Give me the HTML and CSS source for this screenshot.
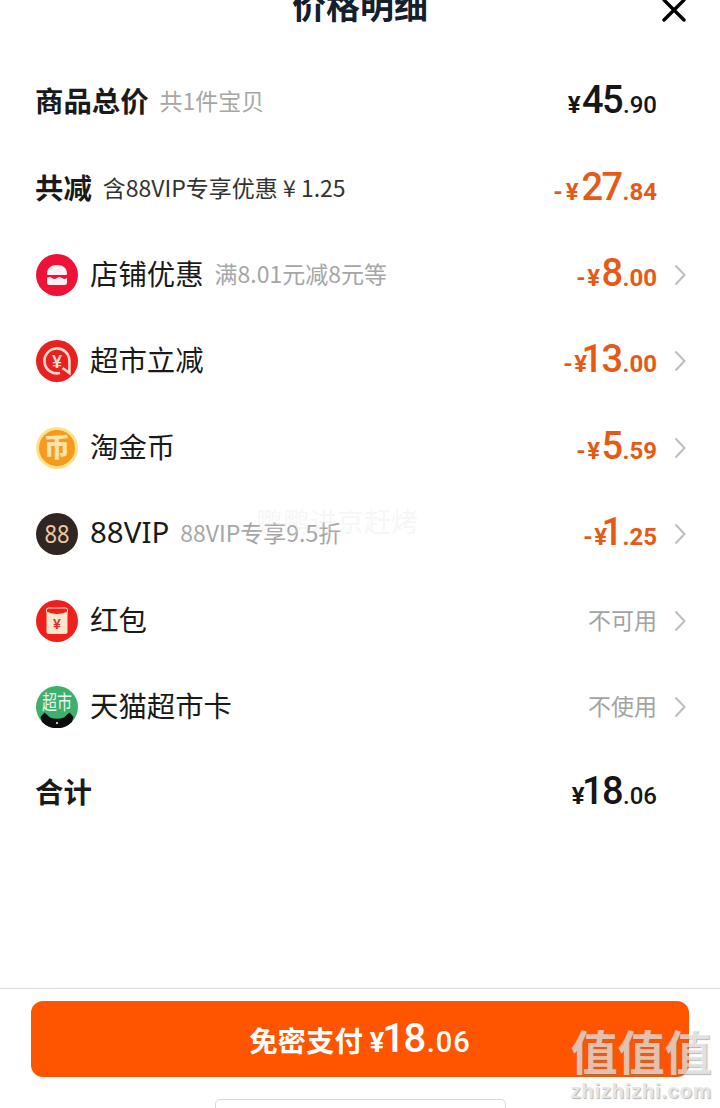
FILE: index.html
```html
<!DOCTYPE html>
<html lang="zh">
<head>
<meta charset="utf-8">
<title>价格明细</title>
<link rel="stylesheet" href="styles.css">
</head>
<body>
<div class="page">
  <header class="header">
    <span></span>
    <h1 class="title">价格明细</h1>
    <svg class="close" width="24" height="22" viewBox="0 0 24 22"><path d="M2 0 L22 20 M22 0 L2 20" fill="none" stroke="#000" stroke-width="3.4" stroke-linecap="round"/></svg>
  </header>

  <main class="list">
    <div class="row">
      <div class="left"><span class="label strong">商品总价</span><span class="sub">共1件宝贝</span></div>
      <div class="price dark"><span class="cur">¥</span><span class="int">45</span><span class="dec">.90</span></div>
      <span class="slot"></span>
    </div>
    <div class="row">
      <div class="left"><span class="label strong">共减</span><span class="sub darker">含88VIP专享优惠 ¥ 1.25</span></div>
      <div class="price orange"><span class="cur wide">-¥</span><span class="int">27</span><span class="dec">.84</span></div>
      <span class="slot"></span>
    </div>
    <div class="row">
      <div class="left">
        <svg class="icon" viewBox="0 0 42 42"><circle cx="21" cy="21" r="21" fill="#ee1238"/><path d="M11 20 C11 14 15 11 21 11 C27 11 31 14 31 20 a1 1 0 0 1 -1 1 H12 a1 1 0 0 1 -1 -1 Z" fill="#fff" opacity=".94"/><path d="M11 24 q2.5 -2 5 0 t5 0 t5 0 t5 0 V28.5 a2.5 2.5 0 0 1 -2.5 2.5 H13.5 a2.5 2.5 0 0 1 -2.5 -2.5 Z" fill="#fff" opacity=".94"/></svg>
        <span class="label">店铺优惠</span><span class="sub">满8.01元减8元等</span>
      </div>
      <div class="price orange"><span class="cur">-¥</span><span class="int">8</span><span class="dec">.00</span></div>
      <span class="slot"><svg class="chev" width="12" height="22" viewBox="0 0 12 22"><path d="M1.5 1.5 L10.5 11 L1.5 20.5" fill="none" stroke="#bdbdbd" stroke-width="2"/></svg></span>
    </div>
    <div class="row">
      <div class="left">
        <svg class="icon" viewBox="0 0 42 42"><circle cx="21" cy="21" r="21" fill="#e8211f"/><path d="M24 33 A12.5 12.5 0 1 1 33.4 21 L33.4 33 L26.5 28" fill="none" stroke="#fbd9cf" stroke-width="2.6"/><text x="21" y="27.5" class="icon-yen">¥</text></svg>
        <span class="label">超市立减</span>
      </div>
      <div class="price orange"><span class="cur">-¥</span><span class="int one">13</span><span class="dec">.00</span></div>
      <span class="slot"><svg class="chev" width="12" height="22" viewBox="0 0 12 22"><path d="M1.5 1.5 L10.5 11 L1.5 20.5" fill="none" stroke="#bdbdbd" stroke-width="2"/></svg></span>
    </div>
    <div class="row">
      <div class="left">
        <svg class="icon" viewBox="0 0 42 42"><circle cx="21" cy="21" r="21" fill="#fde28a"/><circle cx="21" cy="21" r="18" fill="#f59a1c"/><text x="21" y="30" class="icon-coin">币</text></svg>
        <span class="label">淘金币</span>
      </div>
      <div class="price orange"><span class="cur">-¥</span><span class="int">5</span><span class="dec">.59</span></div>
      <span class="slot"><svg class="chev" width="12" height="22" viewBox="0 0 12 22"><path d="M1.5 1.5 L10.5 11 L1.5 20.5" fill="none" stroke="#bdbdbd" stroke-width="2"/></svg></span>
    </div>
    <div class="row">
      <div class="left">
        <svg class="icon" viewBox="0 0 42 42"><circle cx="21" cy="21" r="21" fill="#2f2623"/><text x="21" y="30" class="icon-88" textLength="25" lengthAdjust="spacingAndGlyphs">88</text></svg>
        <span class="label vip">88VIP</span><span class="sub">88VIP专享9.5折</span>
      </div>
      <div class="price orange"><span class="cur">-¥</span><span class="int one">1</span><span class="dec">.25</span></div>
      <span class="slot"><svg class="chev" width="12" height="22" viewBox="0 0 12 22"><path d="M1.5 1.5 L10.5 11 L1.5 20.5" fill="none" stroke="#bdbdbd" stroke-width="2"/></svg></span>
    </div>
    <div class="row">
      <div class="left">
        <svg class="icon" viewBox="0 0 42 42"><circle cx="21" cy="21" r="21" fill="#ee1f1c"/><rect x="10.5" y="8" width="21" height="26" rx="2" fill="#fce6cc"/><path d="M10.5 12 Q21 17 31.5 12 V10 a2 2 0 0 0 -2 -2 H12.5 a2 2 0 0 0 -2 2 Z" fill="#ee1f1c" stroke="#fce6cc" stroke-width="1"/><text x="21" y="29" class="icon-packet">¥</text></svg>
        <span class="label">红包</span>
      </div>
      <div class="note">不可用</div>
      <span class="slot"><svg class="chev" width="12" height="22" viewBox="0 0 12 22"><path d="M1.5 1.5 L10.5 11 L1.5 20.5" fill="none" stroke="#bdbdbd" stroke-width="2"/></svg></span>
    </div>
    <div class="row">
      <div class="left">
        <svg class="icon" viewBox="0 0 42 42"><circle cx="21" cy="21" r="21" fill="#3cb06c"/><text x="21" y="24" class="icon-market" textLength="30" lengthAdjust="spacingAndGlyphs">超市</text><path d="M4.5 31 L8.5 26.5 L14 31.5 Q21 34 28 31.5 L33.5 26.5 L37.5 31 L36 36 A21 21 0 0 1 6 36 Z" fill="#0d0d0d"/><circle cx="21" cy="37" r="1" fill="#fff"/></svg>
        <span class="label">天猫超市卡</span>
      </div>
      <div class="note">不使用</div>
      <span class="slot"><svg class="chev" width="12" height="22" viewBox="0 0 12 22"><path d="M1.5 1.5 L10.5 11 L1.5 20.5" fill="none" stroke="#bdbdbd" stroke-width="2"/></svg></span>
    </div>
    <div class="row">
      <div class="left"><span class="label strong">合计</span></div>
      <div class="price dark"><span class="cur">¥</span><span class="int one">18</span><span class="dec">.06</span></div>
      <span class="slot"></span>
    </div>
  </main>

  <footer class="footer">
    <button class="pay">
      <span class="pay-label">免密支付</span><span class="pay-cur">¥</span><span class="pay-int">18</span><span class="pay-dec">.06</span>
    </button>
    <div class="home-bar"></div>
  </footer>

  <div class="mark-center">鹏鹏进京赶烤</div>
  <div class="mark-corner">
    <div class="mark-big">值值值</div>
    <div class="mark-small">zhizhizhi.com</div>
  </div>
</div>
</body>
</html>
```

FILE: styles.css
```css
* { box-sizing: border-box; }
html, body { margin: 0; padding: 0; background: #fff; }
.page {
  position: relative;
  width: 720px;
  height: 1108px;
  overflow: hidden;
  display: flex;
  flex-direction: column;
  font-family: "Noto Sans CJK SC", "Noto Sans", sans-serif;
  color: #111;
}
.header {
  height: 22px;
  flex: none;
  display: grid;
  grid-template-columns: 1fr auto 1fr;
  grid-template-rows: 22px;
  align-items: end;
  padding-right: 34px;
}
.title {
  margin: 0 0 -6px;
  font-size: 34px;
  line-height: 46px;
  font-weight: 700;
  color: #14202e;
  padding-left: 34px;
}
.close { justify-self: end; }
.list {
  flex: none;
  padding: 37px 34px 0 36px;
}
.row {
  height: 86.4px;
  display: flex;
  align-items: center;
}
.left {
  flex: 1;
  display: flex;
  align-items: center;
  min-width: 0;
}
.icon {
  width: 42px;
  height: 42px;
  flex: none;
  margin-right: 12px;
}
.label {
  font-size: 28.4px;
  line-height: 40px;
  padding-bottom: 4px;
  height: 44px;
  color: #1a1a1a;
}
.label.strong { font-weight: 700; margin-left: -1px; }
.label.vip { font-family: "Noto Sans", sans-serif; font-size: 29.5px; }
.sub {
  margin-left: 11px;
  font-size: 23px;
  line-height: 32px;
  padding-bottom: 4px;
  height: 36px;
  color: #a6a6a6;
  white-space: nowrap;
}
.sub.darker { color: #333; }
.price {
  display: flex;
  align-items: baseline;
  padding-bottom: 4px;
  font-family: Roboto, "Liberation Sans", sans-serif;
  font-weight: 500;
  white-space: nowrap;
}
.dark { color: #161616; }
.orange { color: #e65a18; }
.cur { font-size: 24px; font-weight: 700; letter-spacing: 1.5px; }
.cur.wide { letter-spacing: 3px; }
.int { font-size: 38px; line-height: 44px; letter-spacing: -1.6px; }
.int.one { margin-left: -4px; }
.orange .int.one { margin-left: -7px; }
.dec { font-size: 24px; margin-left: 1px; }
.orange .dec { font-weight: 700; }
.note {
  font-size: 23px;
  line-height: 32px;
  padding-bottom: 4px;
  color: #a3a3a3;
}
.slot {
  width: 29px;
  flex: none;
  display: flex;
  justify-content: flex-end;
}
.chev { display: block; }
.icon-yen {
  font-family: "Liberation Sans", sans-serif;
  font-size: 18px;
  font-weight: 700;
  fill: #fbd9cf;
  text-anchor: middle;
}
.icon-coin {
  font-family: "Noto Sans CJK SC", sans-serif;
  font-size: 26px;
  font-weight: 900;
  fill: #fde4ad;
  text-anchor: middle;
}
.icon-88 {
  font-family: "Noto Sans", sans-serif;
  font-size: 26px;
  fill: #ecc9a2;
  text-anchor: middle;
}
.icon-packet {
  font-family: "Liberation Sans", sans-serif;
  font-size: 14px;
  font-weight: 700;
  fill: #d8322a;
  text-anchor: middle;
}
.icon-market {
  font-family: "Noto Sans CJK SC", sans-serif;
  font-size: 20px;
  fill: #e9f8ee;
  text-anchor: middle;
}
.footer {
  margin-top: auto;
  height: 120px;
  flex: none;
  border-top: 1px solid #dcdcdc;
  padding: 12px 31px 0;
  display: flex;
  flex-direction: column;
  align-items: center;
}
.pay {
  width: 100%;
  height: 76px;
  flex: none;
  border: 0;
  border-radius: 12px;
  background: #ff5500;
  color: #fff;
  font-family: Roboto, "Liberation Sans", sans-serif;
  display: flex;
  align-items: baseline;
  justify-content: center;
  padding: 13px 0 0;
}
.pay-label {
  font-family: "Noto Sans CJK SC", sans-serif;
  font-size: 28.4px;
  font-weight: 700;
  margin-right: 7px;
}
.pay-cur { font-size: 27px; font-weight: 700; margin-right: 0; }
.pay-int { font-size: 40px; font-weight: 500; line-height: 50px; letter-spacing: -1.5px; margin-left: -2px; }
.pay-dec { font-size: 29px; font-weight: 500; letter-spacing: 1px; margin-left: 2px; }
.home-bar {
  width: 291px;
  height: 12px;
  flex: none;
  margin-top: 22px;
  border: 1px solid #d8d8d8;
  border-radius: 5px 5px 0 0;
}
.mark-center {
  position: absolute;
  left: 256px;
  top: 503px;
  font-size: 27px;
  line-height: 36px;
  color: rgba(225, 225, 225, .3);
  white-space: nowrap;
}
.mark-corner {
  position: absolute;
  left: 570px;
  top: 1022px;
  width: 142px;
  text-align: center;
  color: rgba(255, 255, 255, .62);
  text-shadow: 1px 1px 1px rgba(120, 120, 120, .55);
}
.mark-big {
  font-size: 47px;
  line-height: 56px;
  font-weight: 700;
  white-space: nowrap;
}
.mark-small {
  font-family: "Liberation Sans", sans-serif;
  font-size: 20.5px;
  line-height: 22px;
  margin-top: 2px;
  font-weight: 700;
  letter-spacing: .6px;
  color: #e6e6e6;
  white-space: nowrap;
}
```
